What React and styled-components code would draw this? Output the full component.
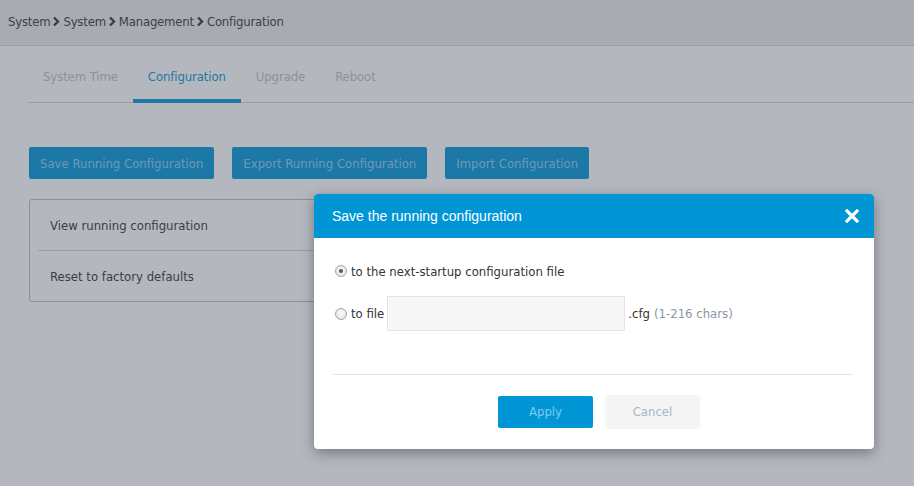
import React from "react";
import styled, { createGlobalStyle } from "styled-components";

const FONT = `"Liberation Sans Narrow", "DejaVu Sans Condensed", "Liberation Sans", sans-serif`;

const GlobalStyle = createGlobalStyle`
  html, body {
    margin: 0;
    padding: 0;
    background: #ffffff;
    font-family: ${FONT};
  }
  * { box-sizing: border-box; }
`;

const Page = styled.div`
  position: relative;
  width: 914px;
  height: 486px;
  overflow: hidden;
  background: #ffffff;
  color: #333;
`;

const Header = styled.div`
  height: 46px;
  background: #ececec;
  border-bottom: 1px solid #d4d4d4;
  display: flex;
  align-items: center;
  padding: 0 0 2px 8px;
  font-size: 13px;
  letter-spacing: -0.2px;
  color: #363636;
`;

const Crumb = styled.span`
  display: flex;
  align-items: center;
`;

const Chevron = () => (
  <svg width="9" height="11" viewBox="0 0 9 11" style={{ margin: "0 2px 0 2px" }}>
    <path d="M2 1.5 L6 5.5 L2 9.5" fill="none" stroke="#363636" strokeWidth="2.4" />
  </svg>
);

const Content = styled.div`
  padding-left: 28px;
`;

const TabBar = styled.div`
  display: flex;
  border-bottom: 1px solid #d4d4d4;
`;

const Tab = styled.div`
  padding: 21px 15px 12px;
  line-height: 20px;
  font-size: 13px;
  letter-spacing: -0.1px;
  color: ${(p) => (p.$active ? "#0096d6" : "#bebebe")};
  border-bottom: 4px solid ${(p) => (p.$active ? "#0096d6" : "transparent")};
  margin-bottom: -1px;
`;

const ButtonRow = styled.div`
  display: flex;
  gap: 18px;
  margin: 44px 0 0 1px;
`;

const ActionButton = styled.div`
  height: 32px;
  padding: 0 11px;
  display: flex;
  align-items: center;
  background: #0096d6;
  color: rgba(255, 255, 255, 0.55);
  font-size: 13px;
  border-radius: 2px;
`;

const Panel = styled.div`
  margin: 20px 0 0 1px;
  width: 420px;
  border: 1px solid #bcbcbc;
  border-radius: 3px;
`;

const PanelRow = styled.div`
  margin: 0 8px;
  height: ${(p) => (p.$last ? "50px" : "51px")};
  padding-left: 12px;
  display: flex;
  align-items: center;
  font-size: 13px;
  color: #333;
  border-bottom: ${(p) => (p.$last ? "none" : "1px solid #d4d4d4")};
`;

const Overlay = styled.div`
  position: absolute;
  inset: 0;
  background: rgba(69, 76, 95, 0.4);
`;

const Modal = styled.div`
  position: absolute;
  left: 314px;
  top: 194px;
  width: 560px;
  background: #fff;
  border-radius: 4px;
  overflow: hidden;
  box-shadow: 0 4px 14px rgba(0, 0, 0, 0.35);
`;

const ModalHeader = styled.div`
  height: 44px;
  background: #0096d6;
  display: flex;
  align-items: center;
  justify-content: space-between;
  padding: 0 15px 0 18px;
  color: #fff;
  font-family: "Liberation Sans", Arial, sans-serif;
  font-size: 14px;
`;

const ModalBody = styled.div`
  padding: 20px 20px 43px 21px;
  display: flex;
  flex-direction: column;
  gap: 12px;
`;

const OptionRow = styled.div`
  display: flex;
  align-items: center;
  min-height: 26px;
  font-size: 13px;
  color: #333;
`;

const Radio = styled.span`
  width: 12px;
  height: 12px;
  border-radius: 50%;
  border: 1px solid #a6a6a6;
  background: radial-gradient(circle at 50% 40%, #fdfdfd, #dcdcdc);
  display: inline-flex;
  align-items: center;
  justify-content: center;
  margin-right: 4px;
  &::after {
    content: "";
    width: 4px;
    height: 4px;
    border-radius: 50%;
    background: ${(p) => (p.$checked ? "#555" : "transparent")};
  }
`;

const FileInput = styled.div`
  width: 238px;
  height: 35px;
  margin: 0 3px 0 3px;
  background: #f7f7f7;
  border: 1px solid #e4e4e4;
`;

const Hint = styled.span`
  color: #8a96a6;
  margin-left: 4px;
`;

const Divider = styled.div`
  margin: 0 21px 0 19px;
  border-top: 1px solid #e4e4e4;
`;

const Footer = styled.div`
  padding: 20px 0 20px 10px;
  display: flex;
  justify-content: center;
  align-items: center;
  gap: 12px;
`;

const DialogButton = styled.div`
  width: 95px;
  height: ${(p) => (p.$primary ? "32px" : "34px")};
  display: flex;
  align-items: center;
  justify-content: center;
  padding-bottom: 2px;
  font-size: 13px;
  border-radius: 2px;
  background: ${(p) => (p.$primary ? "#0096d6" : "#f5f5f5")};
  color: ${(p) => (p.$primary ? "#80c9ee" : "#a9b6c6")};
`;

const CloseIcon = () => (
  <svg width="14" height="14" viewBox="0 0 14 14">
    <path d="M2 2 L12 12 M12 2 L2 12" stroke="#fff" strokeWidth="3.2" strokeLinecap="square" />
  </svg>
);

const crumbs = ["System", "System", "Management", "Configuration"];
const tabs = ["System Time", "Configuration", "Upgrade", "Reboot"];

export default function App() {
  return (
    <Page>
      <GlobalStyle />
      <Header>
        {crumbs.map((c, i) => (
          <Crumb key={i}>
            {c}
            {i < crumbs.length - 1 && <Chevron />}
          </Crumb>
        ))}
      </Header>
      <Content>
        <TabBar>
          {tabs.map((t) => (
            <Tab key={t} $active={t === "Configuration"}>
              {t}
            </Tab>
          ))}
        </TabBar>
        <ButtonRow>
          <ActionButton>Save Running Configuration</ActionButton>
          <ActionButton>Export Running Configuration</ActionButton>
          <ActionButton>Import Configuration</ActionButton>
        </ButtonRow>
        <Panel>
          <PanelRow>View running configuration</PanelRow>
          <PanelRow $last>Reset to factory defaults</PanelRow>
        </Panel>
      </Content>
      <Overlay />
      <Modal>
        <ModalHeader>
          <span>Save the running configuration</span>
          <CloseIcon />
        </ModalHeader>
        <ModalBody>
          <OptionRow>
            <Radio $checked />
            to the next-startup configuration file
          </OptionRow>
          <OptionRow>
            <Radio />
            to file
            <FileInput />
            .cfg<Hint>(1-216 chars)</Hint>
          </OptionRow>
        </ModalBody>
        <Divider />
        <Footer>
          <DialogButton $primary>Apply</DialogButton>
          <DialogButton>Cancel</DialogButton>
        </Footer>
      </Modal>
    </Page>
  );
}
